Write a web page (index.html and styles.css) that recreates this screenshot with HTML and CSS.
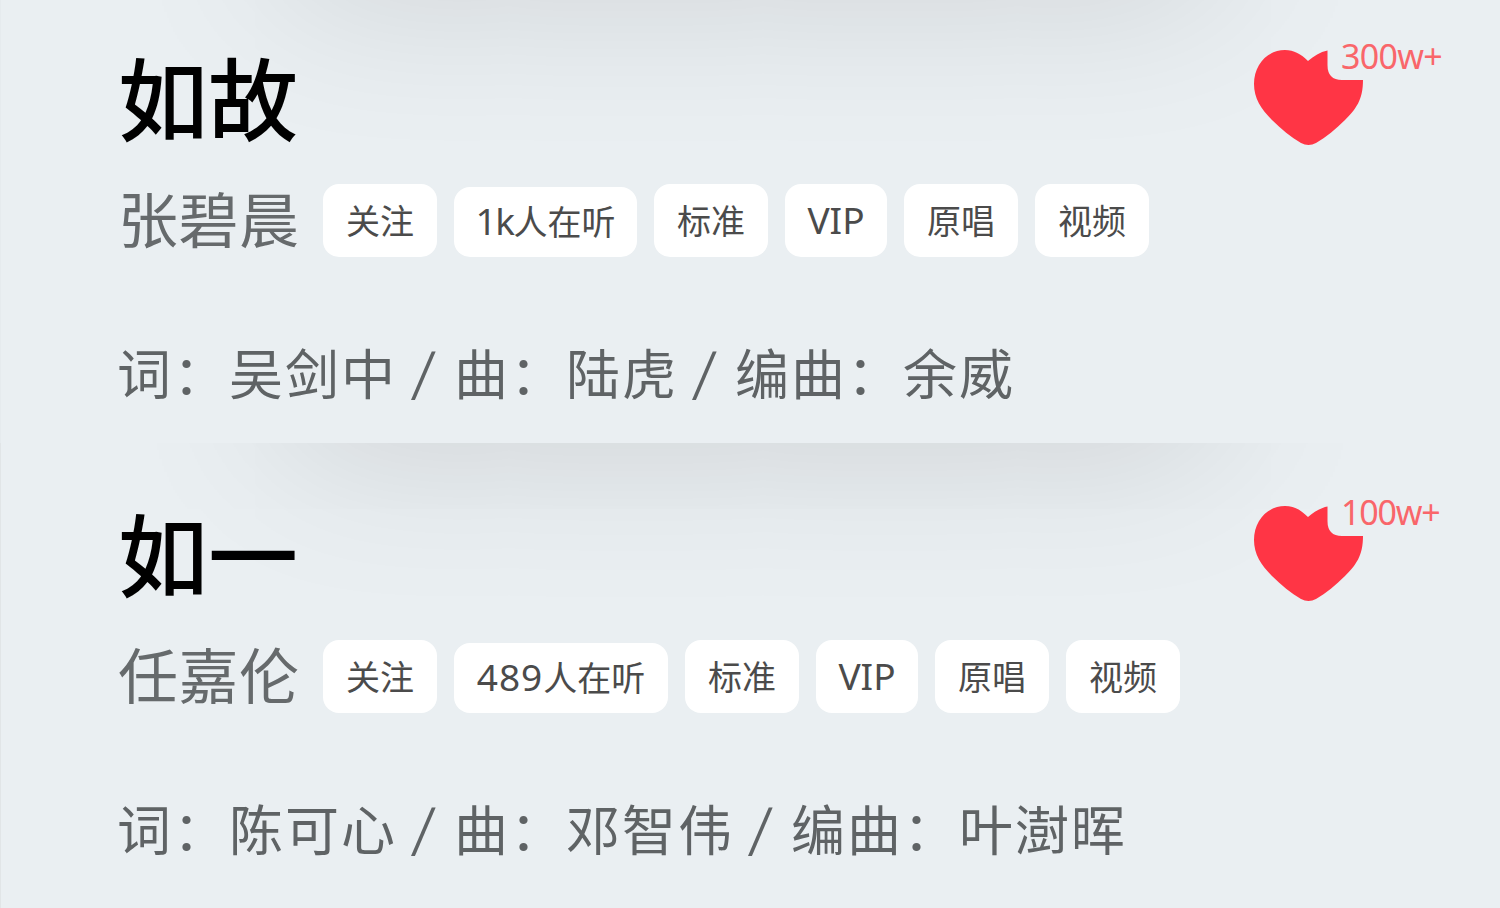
FILE: index.html
```html
<!DOCTYPE html>
<html lang="zh-CN">
<head>
<meta charset="utf-8">
<title>如故 / 如一</title>
<link rel="stylesheet" href="styles.css">
</head>
<body>
<section class="song first">
  <header class="head">
    <h1 class="title">如故</h1>
    <div class="like">
      <svg class="heart" viewBox="0 0 110 97"><path d="M74.500 1.500C67 3 61 7 55 12C48 5 41 1 32 1C14 1 1 16 1 35C1 49 8 60 19 71C28 80 38 88 48 94Q55.500 98 63 94C73 88 83 80 92 71C103 60 110 51 110 31H89Q74.500 31 74.500 16Z"/></svg>
      <span class="count">300w+</span>
    </div>
  </header>
  <div class="artist-row">
    <span class="artist">张碧晨</span>
    <span class="tag w114">关注</span><span class="tag short w183"><span class="latin tight">1k</span>人在听</span><span class="tag w114">标准</span><span class="tag w102"><span class="latin">VIP</span></span><span class="tag w114">原唱</span><span class="tag w114">视频</span>
  </div>
  <p class="credits"><span>词：</span><span>吴剑中</span><span class="slash">/</span><span>曲：</span><span>陆虎</span><span class="slash">/</span><span>编曲：</span><span>余威</span></p>
</section>
<section class="song second">
  <header class="head">
    <h1 class="title">如一</h1>
    <div class="like">
      <svg class="heart" viewBox="0 0 110 97"><path d="M74.500 1.500C67 3 61 7 55 12C48 5 41 1 32 1C14 1 1 16 1 35C1 49 8 60 19 71C28 80 38 88 48 94Q55.500 98 63 94C73 88 83 80 92 71C103 60 110 51 110 31H89Q74.500 31 74.500 16Z"/></svg>
      <span class="count narrow">100w+</span>
    </div>
  </header>
  <div class="artist-row">
    <span class="artist">任嘉伦</span>
    <span class="tag w114">关注</span><span class="tag short w214"><span class="latin wide">489</span>人在听</span><span class="tag w114">标准</span><span class="tag w102"><span class="latin">VIP</span></span><span class="tag w114">原唱</span><span class="tag w114">视频</span>
  </div>
  <p class="credits"><span>词：</span><span>陈可心</span><span class="slash">/</span><span>曲：</span><span>邓智伟</span><span class="slash">/</span><span>编曲：</span><span>叶澍晖</span></p>
</section>
</body>
</html>
```
FILE: styles.css
```css
* { box-sizing: border-box; }
body {
  margin: 0;
  background: #eaeff2;
  font-family: "Noto Sans", "Noto Sans CJK SC", sans-serif;
  overflow: hidden;
}
.song {
  position: relative;
  overflow: hidden;
  padding: 42px 0 0 117px;
  border-left: 1px solid #e1e5e7;
  background: #eaeff2;
}
/* soft shadow falling from the card above */
.song::before {
  content: "";
  position: absolute;
  left: 285px;
  right: 285px;
  top: -300px;
  height: 300px;
  box-shadow: 0 0 165px rgba(0, 0, 0, 0.145);
}
.first { height: 443px; border-left-color: #e6ebee; }
.first::before { top: -313px; }
.second { height: 465px; padding-top: 55px; }
.head { display: flex; position: relative; height: 142px; }
.title {
  margin: 0;
  width: 1135px;
  font-size: 90px;
  line-height: 114px;
  font-weight: 500;
  color: #000;
}
.like { position: relative; padding-top: 7px; }
.heart { display: block; width: 110px; height: 97px; fill: #ff3545; }
.count {
  position: absolute;
  left: 88px;
  top: -8px;
  font-size: 34px;
  line-height: 44px;
  letter-spacing: -0.7px;
  color: #f9666a;
}
.narrow { letter-spacing: -1.2px; }
.artist-row { display: flex; position: relative; gap: 17px; height: 73px; }
.artist {
  width: 188px;
  font-size: 60px;
  line-height: 73px;
  letter-spacing: 0.5px;
  color: #666a6c;
  white-space: nowrap;
}
.tag {
  height: 73px;
  border-radius: 16px;
  background: #fff;
  color: #4b4b4b;
  font-size: 34px;
  line-height: 74px;
  text-align: center;
  white-space: nowrap;
}
.latin { font-size: 37px; line-height: 1; }
.tight { letter-spacing: -1.5px; }
.wide { letter-spacing: 1px; }
.short { height: 70px; margin-top: 3px; line-height: 71px; }
.w102 { width: 102px; }
.w114 { width: 114px; }
.w183 { width: 183px; }
.w214 { width: 214px; }
.credits {
  display: flex;
  position: relative;
  margin: 77px 0 0 -1px;
  font-size: 54px;
  line-height: 80px;
  letter-spacing: 2px;
  color: #5f6365;
}
.slash {
  width: 57px;
  padding-right: 4px;
  font-size: 68px;
  line-height: 80px;
  letter-spacing: 0;
  font-weight: 300;
  text-align: center;
  transform: skewX(-3deg);
}
```
